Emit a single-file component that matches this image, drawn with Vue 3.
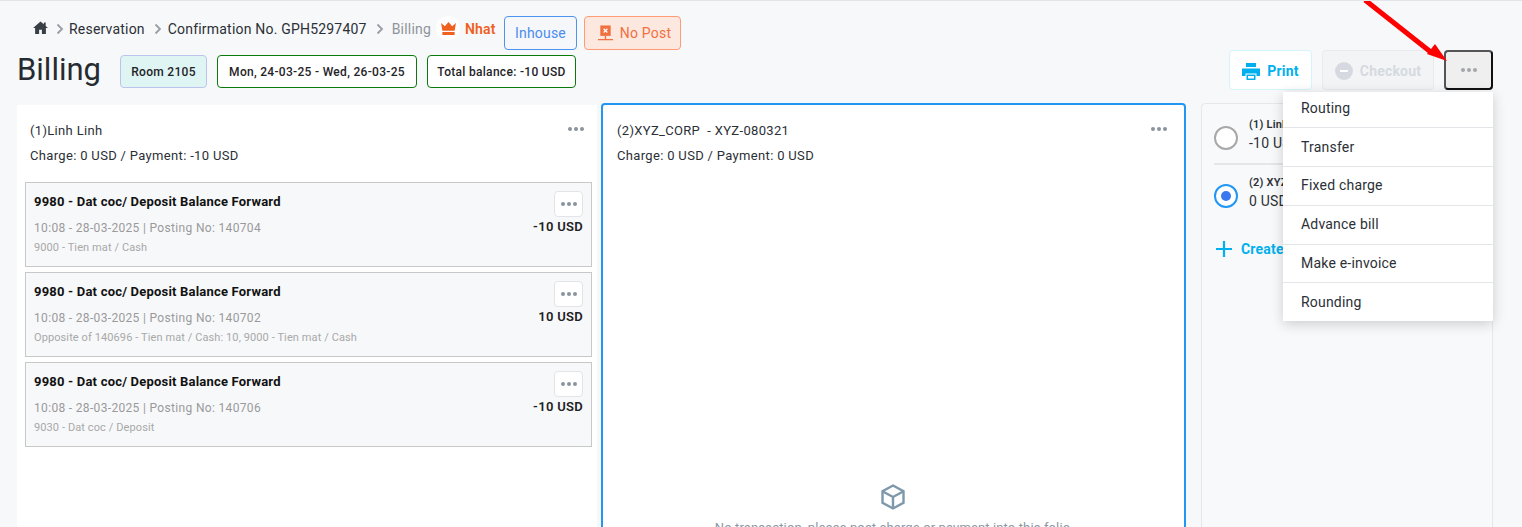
<script setup>
const cards = [
  { title: '9980 - Dat coc/ Deposit Balance Forward', meta: '10:08 - 28-03-2025 | Posting No: 140704', amount: '-10 USD', sub: '9000 - Tien mat / Cash' },
  { title: '9980 - Dat coc/ Deposit Balance Forward', meta: '10:08 - 28-03-2025 | Posting No: 140702', amount: '10 USD', sub: 'Opposite of 140696 - Tien mat / Cash: 10, 9000 - Tien mat / Cash' },
  { title: '9980 - Dat coc/ Deposit Balance Forward', meta: '10:08 - 28-03-2025 | Posting No: 140706', amount: '-10 USD', sub: '9030 - Dat coc / Deposit' },
]
const menu = ['Routing', 'Transfer', 'Fixed charge', 'Advance bill', 'Make e-invoice', 'Rounding']
</script>

<template>
  <div class="page">
    <header class="head">
      <div class="crumb-row">
        <nav class="crumbs">
          <svg class="home" viewBox="0 0 16 14" width="15" height="13"><path d="M8 .5 0 7.5h2.2V14h4.3V9.3h3V14h4.3V7.5H16L13.6 5.4V1.6h-2v2L8 .5Z" fill="#3a3f45"/></svg>
          <svg class="chev first-chev" viewBox="0 0 8 12" width="8" height="12"><path d="M1.5 1.5 6 6l-4.5 4.5" fill="none" stroke="#9a9fa6" stroke-width="1.8"/></svg>
          <span>Reservation</span>
          <svg class="chev" viewBox="0 0 8 12" width="8" height="12"><path d="M1.5 1.5 6 6l-4.5 4.5" fill="none" stroke="#9a9fa6" stroke-width="1.8"/></svg>
          <span>Confirmation No. GPH5297407</span>
          <svg class="chev" viewBox="0 0 8 12" width="8" height="12"><path d="M1.5 1.5 6 6l-4.5 4.5" fill="none" stroke="#9a9fa6" stroke-width="1.8"/></svg>
          <span class="muted">Billing</span>
          <span class="crown">
            <svg viewBox="0 0 16 14" width="15" height="13"><path d="M0 1l4 3.6L8 0l4 4.6L16 1l-1.4 8.4H1.4L0 1Zm1.4 9.8h13.2V14H1.4v-3.2Z" fill="#f0601f"/></svg>
          </span>
          <b class="vip">Nhat</b>
        </nav>
        <button class="tag inhouse">Inhouse</button>
        <button class="tag nopost">
          <svg viewBox="0 0 18 18" width="17" height="17"><rect x="3.5" y="0.5" width="11" height="11" fill="#f0703f"/><path d="M7 4l4 4M11 4l-4 4" stroke="#fff" stroke-width="1.3"/><path d="M9 11.5V15M1 15.5h16" stroke="#f0703f" stroke-width="1.4"/></svg>
          <span>No Post</span>
        </button>
      </div>
      <div class="title-row">
        <h1>Billing</h1>
        <span class="chip room">Room 2105</span>
        <span class="chip dates">Mon, 24-03-25 - Wed, 26-03-25</span>
        <span class="chip total">Total balance: -10 USD</span>
        <div class="actions">
          <button class="act print">
            <svg viewBox="0 0 18 17" width="18" height="17"><path d="M4 0h10v4H4V0ZM0 5.5h18V13h-3.5v-2.5h-11V13H0V5.5Z" fill="#00b0ee"/><path d="M4.5 11.5h9V17h-9v-5.5Z" fill="#00b0ee"/><path d="M6 13h6v2.5H6z" fill="#fff"/></svg>
            <span>Print</span>
          </button>
          <button class="act checkout">
            <svg viewBox="0 0 18 18" width="18" height="18"><circle cx="9" cy="9" r="9" fill="#d6dae0"/><path d="M5 9h8" stroke="#fff" stroke-width="2"/></svg>
            <span>Checkout</span>
          </button>
          <button class="act more"><i></i><i></i><i></i></button>
        </div>
      </div>
    </header>

    <main class="panels">
      <section class="panel first">
        <div class="folio-head">
          <div>(1)Linh Linh</div>
          <div class="dots"><i></i><i></i><i></i></div>
        </div>
        <div class="folio-sum">Charge: 0 USD / Payment: -10 USD</div>
        <div class="cards">
          <article v-for="c in cards" :key="c.meta" class="card">
            <div class="card-top">
              <div class="card-title">{{ c.title }}</div>
              <button class="card-btn"><i></i><i></i><i></i></button>
            </div>
            <div class="card-mid">
              <span class="meta">{{ c.meta }}</span>
              <b class="amount">{{ c.amount }}</b>
            </div>
            <div class="sub">{{ c.sub }}</div>
          </article>
        </div>
      </section>

      <section class="panel second">
        <div class="folio-head">
          <div>(2)XYZ_CORP&nbsp; - XYZ-080321</div>
          <div class="dots"><i></i><i></i><i></i></div>
        </div>
        <div class="folio-sum">Charge: 0 USD / Payment: 0 USD</div>
        <div class="empty">
          <svg viewBox="0 0 24 26" width="24" height="26" fill="none" stroke="#7d98aa" stroke-width="2.4"><path d="M12 1.5 22.5 7.3v11.4L12 24.5 1.5 18.7V7.3L12 1.5Z"/><path d="M1.8 7.5 12 13l10.2-5.5M12 13v11"/></svg>
          <p>No transaction, please post charge or payment into this folio</p>
        </div>
      </section>

      <aside class="panel side">
        <div class="folio">
          <span class="radio"></span>
          <div class="f-text"><div class="f-name">(1) Linh Linh</div><div class="f-val">-10 USD</div></div>
        </div>
        <div class="folio on">
          <span class="radio"></span>
          <div class="f-text"><div class="f-name">(2) XYZ_CORP</div><div class="f-val">0 USD</div></div>
        </div>
        <div class="create">
          <svg viewBox="0 0 16 16" width="16" height="16"><path d="M8 0v16M0 8h16" stroke="#00b0ee" stroke-width="2.2"/></svg>
          <span>Create new folio</span>
        </div>
      </aside>
    </main>

    <ul class="menu">
      <li v-for="m in menu" :key="m">{{ m }}</li>
    </ul>

    <svg class="arrow" width="100" height="70" viewBox="0 0 100 70">
      <path d="M17 0 84 53" stroke="#f00" stroke-width="5" fill="none"/>
      <path d="M87 44 99 61 79 54Z" fill="#f00"/>
    </svg>
  </div>
</template>

<style>
html, body { margin: 0; background: #f7f8fa; }
</style>

<style scoped>
.page {
  position: relative;
  width: 1522px;
  height: 527px;
  overflow: hidden;
  box-sizing: border-box;
  border-top: 1px solid #e3e5e8;
  background: #f7f8fa;
  font-family: Roboto, "Noto Sans", sans-serif;
  font-size: 14px;
  letter-spacing: .2px;
  color: #2b3036;
}
button { font-family: inherit; letter-spacing: inherit; cursor: pointer; }
.head { padding: 15px 29px 0 18px; }
.crumb-row { display: flex; align-items: flex-start; height: 34px; }
.crumbs { display: flex; align-items: center; height: 26px; padding-left: 15px; font-size: 14px; width: 486px; box-sizing: border-box; white-space: nowrap; }
.home { margin-right: 8px; margin-top: -4px; }
.chev { margin-right: 6px; }
.first-chev { margin-right: 5px; }
.crumbs span + .chev { margin-left: 9px; }
.muted { color: #8f949a; margin-left: 2px; }
.crown { display: flex; align-items: center; justify-content: center; width: 24px; height: 24px; border-radius: 50%; background: #fff; margin-left: 5px; margin-right: 5px; margin-top: -2px; }
.vip { color: #f0601f; font-weight: 600; margin-top: -1px; }
.tag { height: 34px; box-sizing: border-box; border-radius: 4px; font-size: 14px; padding: 0; display: flex; align-items: center; justify-content: center; }
.inhouse { width: 73px; background: #f5f7fa; border: 1px solid #4d94f0; color: #4a8cf0; }
.nopost { width: 97px; margin-left: 7px; padding-left: 3px; gap: 6px; background: #fde8e0; border: 1px solid #ff9c75; color: #f0703f; }
.title-row { display: flex; align-items: center; height: 40px; }
h1 { margin: 0 0 0 -1px; width: 103px; font-size: 31px; font-weight: 400; line-height: 40px; letter-spacing: 0; color: #262b31; }
.chip { display: flex; align-items: center; justify-content: center; height: 33px; box-sizing: border-box; margin-top: 3px; border: 1px solid #0a7a0a; border-radius: 4px; background: #fff; font-size: 12px; font-weight: 500; letter-spacing: .3px; color: #1f2429; }
.chip + .chip { margin-left: 10px; }
.room { width: 87px; background: #dff5f3; border-color: #bcc4ee; }
.dates { width: 200px; }
.total { width: 149px; }
.actions { display: flex; gap: 10px; margin-left: auto; }
.act { display: flex; align-items: center; justify-content: center; gap: 7px; height: 40px; box-sizing: border-box; border-radius: 4px; font-size: 14px; font-weight: 700; }
.act span { padding-top: 2px; }
.print { width: 83px; background: #fff; border: 1px solid #d5f3fb; color: #00b0ee; }
.print svg, .checkout svg { margin-top: 2px; }
.checkout { width: 112px; background: #f3f4f6; border: 1px solid #e8eaed; color: #d5dae0; }
.more { width: 49px; gap: 2px; background: #efefef; border: 2px solid #111; border-left-color: #555; border-top-color: #555; }
.more i, .dots i, .card-btn i { display: block; width: 4px; height: 4px; border-radius: 50%; background: #a3a6aa; }
.panels { display: flex; margin: 13px 29px 0 17px; height: 430px; }
.panel { box-sizing: border-box; }
.first { width: 580px; margin-top: 2px; background: #fff; padding: 16px 5px 0 8px; }
.second { width: 585px; margin-left: 4px; background: #fff; border: 2px solid #2196f3; border-radius: 4px; padding: 16px 13px 0 14px; position: relative; }
.folio-head { display: flex; justify-content: space-between; align-items: center; height: 18px; padding-left: 5px; padding-right: 8px; font-size: 13px; letter-spacing: .33px; }
.second .folio-head { padding-left: 0; padding-right: 4px; }
.folio-sum { height: 18px; margin-top: 9px; padding-left: 5px; font-size: 13px; letter-spacing: .33px; }
.second .folio-sum { padding-left: 0; }
.dots { display: flex; gap: 2px; margin-top: -2px; }
.dots i { background: #8a949e; }
.cards { display: flex; flex-direction: column; gap: 5px; margin-top: 16px; }
.card { box-sizing: border-box; height: 85px; padding: 8px 8px 0 8px; background: #f7f8fa; border: 1px solid #c8c8c8; }
.card-top { display: flex; justify-content: space-between; align-items: flex-start; height: 26px; }
.card-title { font-size: 13px; font-weight: 700; color: #111; line-height: 20px; margin-top: 1px; }
.card-btn { display: flex; align-items: center; justify-content: center; gap: 2px; width: 29px; height: 26px; padding: 0; background: #fff; border: 1px solid #e2e4e8; border-radius: 4px; }
.card-btn i { background: #8a949e; }
.card-mid { display: flex; justify-content: space-between; align-items: center; height: 20px; }
.meta { font-size: 12px; letter-spacing: .33px; color: #9a9a9a; padding-top: 1px; }
.amount { font-size: 13px; font-weight: 600; letter-spacing: .3px; color: #222; margin-top: -2px; }
.sub { margin-top: 2px; font-size: 11px; line-height: 18px; letter-spacing: .1px; color: #a8a8a8; }
.empty { position: absolute; left: 0; right: 0; top: 379px; display: flex; flex-direction: column; align-items: center; margin-left: -2px; }
.empty p { margin: 9px 0 0; font-size: 13px; line-height: 18px; letter-spacing: .13px; color: #8a9aa6; }
.side { width: 292px; margin-left: 15px; border: 1px solid #e5e7eb; border-radius: 4px; background: #f8f9fb; padding: 9px 12px 0; }
.folio { display: flex; align-items: center; gap: 11px; height: 50px; border-bottom: 2px solid #e4e6e9; }
.folio.on { border-bottom: 0; margin-top: 6px; }
.f-text { margin-top: -6px; }
.radio { box-sizing: border-box; width: 24px; height: 24px; border: 2.5px solid #a8a8a8; border-radius: 50%; background: #fff; position: relative; }
.on .radio { border-color: #2196f3; }
.on .radio::after { content: ""; position: absolute; inset: 5px; border-radius: 50%; background: #3b78f0; }
.f-name { font-size: 11px; font-weight: 600; line-height: 15px; padding-top: 1px; }
.f-val { font-size: 14px; line-height: 22px; }
.create { display: flex; align-items: center; gap: 9px; margin-top: 20px; padding-left: 2px; color: #00b0ee; font-weight: 700; font-size: 14px; }
.menu { position: absolute; left: 1283px; top: 91px; width: 210px; margin: 0; padding: 0; list-style: none; background: #fff; box-shadow: 0 3px 12px rgba(0, 0, 0, .18); }
.menu li { box-sizing: border-box; height: 39px; padding-left: 18px; line-height: 36px; font-size: 14px; color: #2b3036; border-bottom: 1px solid #e3e5e8; }
.menu li:first-child { height: 36px; line-height: 33px; }
.menu li:nth-child(2) { line-height: 38px; }
.menu li:nth-child(5) { height: 38px; }
.menu li:last-child { height: 38px; line-height: 38px; border-bottom: 0; }
.arrow { position: absolute; left: 1348px; top: -1px; }
</style>
